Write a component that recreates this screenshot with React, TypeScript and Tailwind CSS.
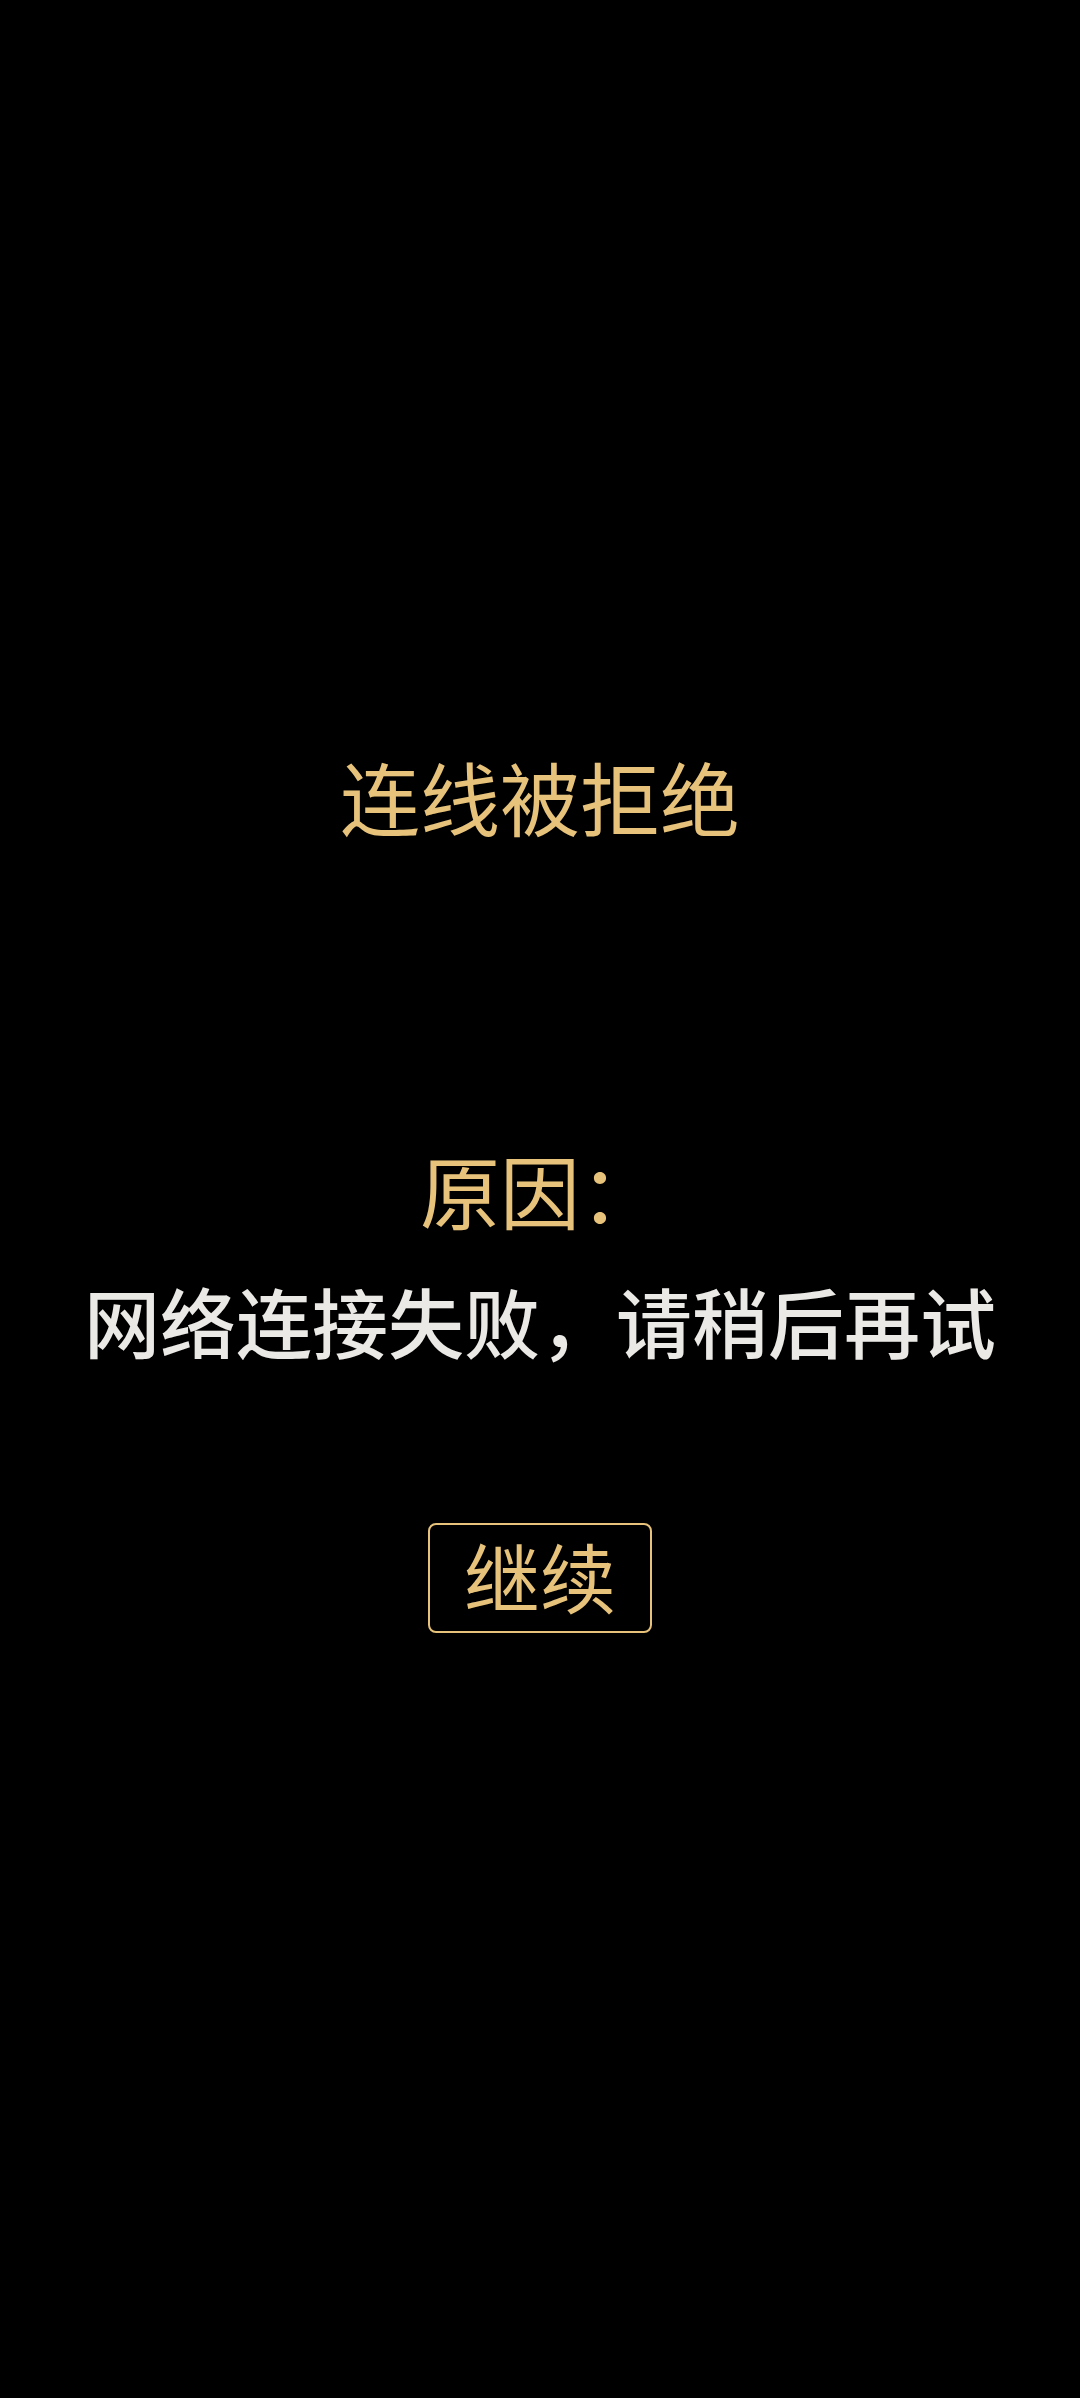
import React from 'react';

const cjk = "font-['Noto_Sans_CJK_SC',sans-serif]";

export default function App() {
    return (
        <div className={`min-h-[2398px] w-full bg-black flex flex-col items-center ${cjk}`}>
            <h1 className="mt-[749px] text-[80px] leading-[92px] font-normal text-[#e6c27a]">连线被拒绝</h1>

            <p className="mt-[301px] text-[80px] leading-[92px] text-[#e6c27a]">原因：</p>
            <p className="mt-[40px] text-[76px] leading-[92px] font-medium text-[#ebe9e6]">网络连接失败，请稍后再试</p>

            <button className="mt-[157px] w-[224px] h-[110px] rounded-lg border-2 border-[#e6c27a] flex items-center justify-center pb-[6px] text-[76px] leading-none text-[#e6c27a]">
                继续
            </button>
        </div>
    );
}
